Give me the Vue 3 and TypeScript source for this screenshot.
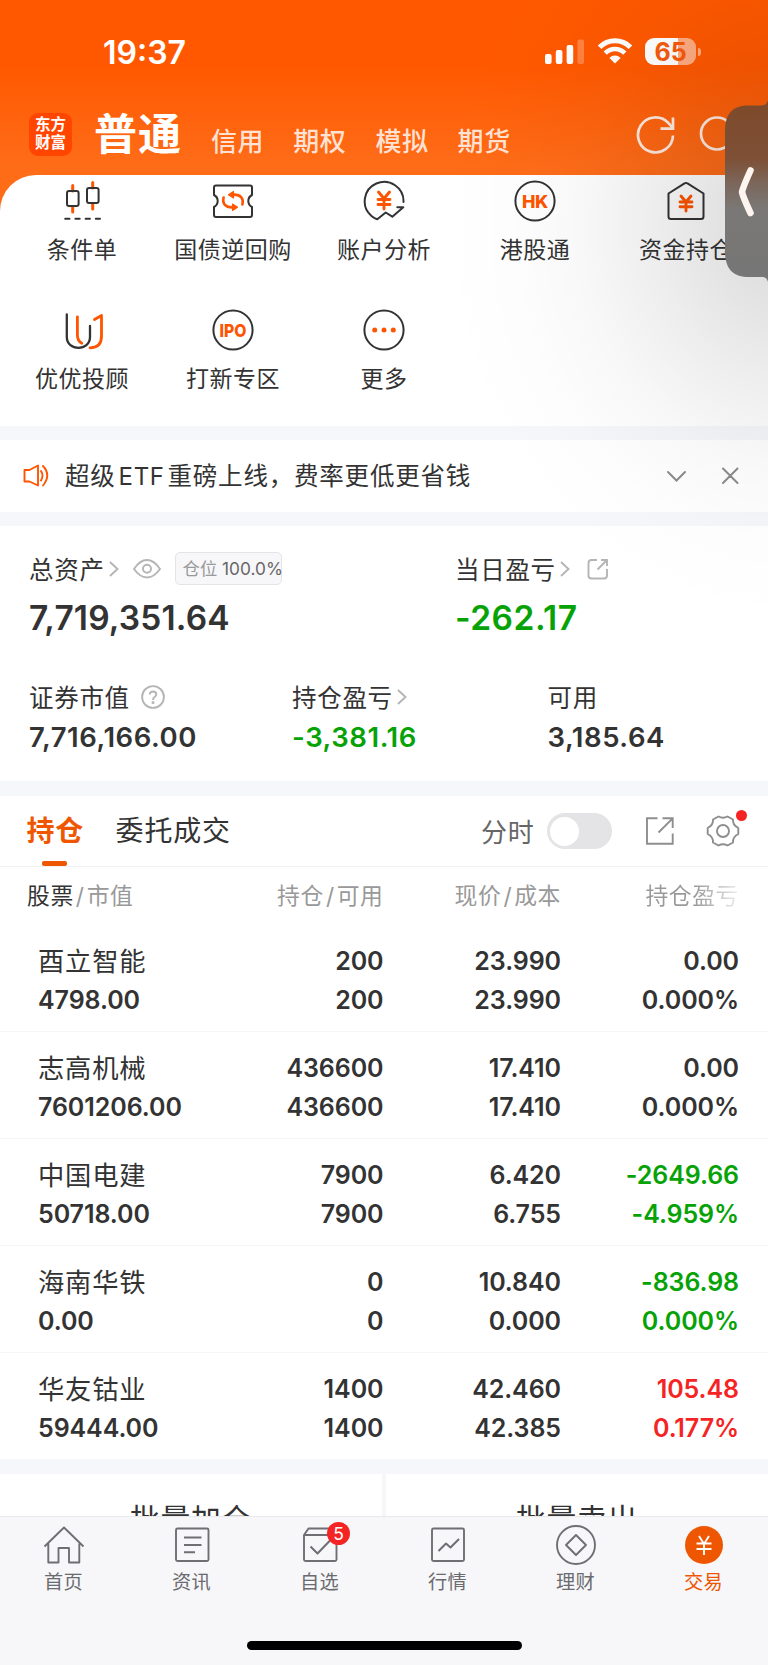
<script setup lang="ts">
interface Shortcut { icon: string; label: string }
interface Holding {
  name: string
  value: string
  qty: string
  avail: string
  price: string
  cost: string
  profit: string
  rate: string
  tone: 'flat' | 'down' | 'up'
}
interface NavItem { icon: string; label: string; badge?: string; active?: boolean }

const accounts: string[] = ['信用', '期权', '模拟', '期货']

const shortcuts: Shortcut[] = [
  { icon: 'candle', label: '条件单' },
  { icon: 'ticket', label: '国债逆回购' },
  { icon: 'analysis', label: '账户分析' },
  { icon: 'hk', label: '港股通' },
  { icon: 'fund', label: '资金持仓' },
  { icon: 'advisor', label: '优优投顾' },
  { icon: 'ipo', label: '打新专区' },
  { icon: 'more', label: '更多' },
]

const holdings: Holding[] = [
  { name: '酉立智能', value: '4798.00', qty: '200', avail: '200', price: '23.990', cost: '23.990', profit: '0.00', rate: '0.000%', tone: 'flat' },
  { name: '志高机械', value: '7601206.00', qty: '436600', avail: '436600', price: '17.410', cost: '17.410', profit: '0.00', rate: '0.000%', tone: 'flat' },
  { name: '中国电建', value: '50718.00', qty: '7900', avail: '7900', price: '6.420', cost: '6.755', profit: '-2649.66', rate: '-4.959%', tone: 'down' },
  { name: '海南华铁', value: '0.00', qty: '0', avail: '0', price: '10.840', cost: '0.000', profit: '-836.98', rate: '0.000%', tone: 'down' },
  { name: '华友钴业', value: '59444.00', qty: '1400', avail: '1400', price: '42.460', cost: '42.385', profit: '105.48', rate: '0.177%', tone: 'up' },
]

const navItems: NavItem[] = [
  { icon: 'home', label: '首页' },
  { icon: 'news', label: '资讯' },
  { icon: 'watch', label: '自选', badge: '5' },
  { icon: 'market', label: '行情' },
  { icon: 'wealth', label: '理财' },
  { icon: 'trade', label: '交易', active: true },
]
</script>

<template>
  <div class="page">
    <header class="top">
      <div class="status">
        <span class="clock">19:37</span>
        <div class="status-icons">
          <svg class="signal" width="40" height="26" viewBox="0 0 40 26" fill="#fff">
            <rect x="0" y="15" width="6.6" height="10" rx="2" />
            <rect x="10.8" y="11" width="6.6" height="14" rx="2" />
            <rect x="21.6" y="6" width="6.6" height="19" rx="2" />
            <rect x="32.4" y="0.5" width="6.6" height="24.5" rx="2" opacity=".25" />
          </svg>
          <svg class="wifi" width="34" height="26" viewBox="0 0 34 26" fill="none" stroke="#fff">
            <path d="M1.6 9.3 A21.4 21.4 0 0 1 32.4 9.3" stroke-width="5" />
            <path d="M7.2 15.2 A13.5 13.5 0 0 1 26.8 15.2" stroke-width="4.6" />
            <path d="M17 25.6 L11.4 19.9 A7.7 7.7 0 0 1 22.6 19.9 Z" fill="#fff" stroke="none" />
          </svg>
          <div class="battery"><span>65</span></div>
          <i class="nub"></i>
        </div>
      </div>
      <div class="accounts">
        <div class="logo"><span>东方</span><span>财富</span></div>
        <h1>普通</h1>
        <nav>
          <a v-for="a in accounts" :key="a">{{ a }}</a>
        </nav>
        <svg class="tools" width="104" height="44" viewBox="0 0 104 44" fill="none" stroke="#ffeadf" stroke-width="2.7">
          <path d="M37 22.5 A17.5 17.5 0 1 1 32.5 10.2 L37 15.2" />
          <path d="M37 4.5 V15.7 H24.5" />
          <circle cx="81" cy="20.5" r="16" />
        </svg>
      </div>
    </header>

    <section class="sheet">
      <div v-for="s in shortcuts" :key="s.label" class="shortcut">
        <svg width="44" height="44" viewBox="0 0 44 44" fill="none" stroke="#333" stroke-width="2" stroke-linecap="round" stroke-linejoin="round">
          <template v-if="s.icon === 'candle'">
            <path d="M12.7 6.5 V12 M12.7 28 V33 M32.7 3.5 V9 M32.7 25 V30" stroke="#ff5500" stroke-width="3" />
            <rect x="7" y="12" width="11.6" height="15" rx="2" />
            <rect x="27" y="9" width="11.6" height="15" rx="2" />
            <path d="M5.2 39.8 H9.5 M15.4 39.8 H19.7 M25.6 39.8 H29.9 M35.8 39.8 H40" />
          </template>
          <template v-else-if="s.icon === 'ticket'">
            <path d="M5 6.500 H39 Q41 6.500 41 8.500 V16 Q37.300 18 37.300 22 Q37.300 26 41 28 V36 Q41 38 39 38 H5 Q3 38 3 36 V28 Q6.700 26 6.700 22 Q6.700 18 3 16 V8.500 Q3 6.500 5 6.500Z" />
            <path d="M12.600 18.500 C11 25 15 28.300 21 28.300 M31.400 25.500 C33 19 29 15.700 23 15.700" stroke="#ff5500" stroke-width="2.700" />
            <path d="M17.500 15.700 L22.500 12.500 V18.900Z M26.500 28.300 L21.500 25.100 V31.500Z" fill="#ff5500" stroke="#ff5500" stroke-width="1.200" />
          </template>
          <template v-else-if="s.icon === 'analysis'">
            <path d="M41.500 23 A19.400 19.400 0 1 0 9.500 37 Q12.500 39.500 15.300 40.300 L23.700 33.500 L30.300 37.700 L41.300 28.300 H35.300" />
            <path d="M16.500 13 L22 19.500 L27.500 13 M22 19.500 V30 M16 20.500 H28 M16 25.500 H28" stroke="#ff5500" stroke-width="2.900" />
          </template>
          <template v-else-if="s.icon === 'hk'">
            <circle cx="22" cy="22" r="19.600" />
            <text x="22" y="28.500" text-anchor="middle" class="glyph hk">HK</text>
          </template>
          <template v-else-if="s.icon === 'fund'">
            <path d="M4.500 14.500 L20.500 4.300 Q22 3.500 23.500 4.300 L39.500 14.500 V37.500 Q39.500 40 37 40 H7 Q4.500 40 4.500 37.500Z" />
            <path d="M17 17 L22 23 L27 17 M22 23 V32 M16 23 H28 M16 27.800 H28" stroke="#ff5500" stroke-width="2.900" />
          </template>
          <template v-else-if="s.icon === 'advisor'">
            <path d="M6.800 6.500 V29 C6.800 43.500 30 43.500 30 29 V18" stroke-width="2.300" />
            <path d="M17.400 9 V27 Q17.400 33 21.800 35.200 M34.500 11.500 L41.500 7.500 V28 Q41.500 39.800 30 39.800" stroke="#ff5500" stroke-width="2.800" />
          </template>
          <template v-else-if="s.icon === 'ipo'">
            <circle cx="22" cy="22" r="19.600" />
            <text x="22" y="28.500" text-anchor="middle" textLength="27" lengthAdjust="spacingAndGlyphs" class="glyph ipo">IPO</text>
          </template>
          <template v-else>
            <circle cx="22" cy="22" r="19.600" />
            <g fill="#ff5500" stroke="none"><circle cx="12.700" cy="22" r="2.500" /><circle cx="22" cy="22" r="2.500" /><circle cx="31.300" cy="22" r="2.500" /></g>
          </template>
        </svg>
        <span>{{ s.label }}</span>
      </div>
    </section>

    <section class="notice">
      <svg width="26" height="24" viewBox="0 0 26 24" fill="none" stroke="#ff5500" stroke-width="1.900" stroke-linejoin="round" stroke-linecap="round">
        <path d="M1.500 6 H6.500 L15 1.500 V21.500 L6.500 17.500 H1.500Z" />
        <path d="M18 7 Q21 11.500 18 16.500 M20 2 Q28.500 11 20 21.500" />
      </svg>
      <p>超级<span class="latin">ETF</span>重磅上线，费率更低更省钱</p>
      <svg class="notice-tools" width="74" height="20" viewBox="0 0 74 20" fill="none" stroke="#8c8c8c" stroke-width="2" stroke-linecap="round">
        <path d="M2 6 L10.500 14.500 L19 6 M57 2.500 L71.500 17 M71.500 2.500 L57 17" />
      </svg>
    </section>

    <section class="assets">
      <div class="row primary">
        <div class="cell">
          <div class="label">
            总资产
            <svg class="arrow" width="10" height="16" viewBox="0 0 10 16"><path d="M1 1 L8.500 8 L1 15" /></svg>
            <svg class="eye" width="28" height="20" viewBox="0 0 28 20"><path d="M1 10 Q7 1 14 1 T27 10 Q21 18.500 14 18.500 T1 10Z" /><circle cx="14" cy="9.700" r="4" /></svg>
            <span class="ratio">仓位 <b>100.0%</b></span>
          </div>
          <strong>7,719,351.64</strong>
        </div>
        <div class="cell">
          <div class="label">
            当日盈亏
            <svg class="arrow" width="10" height="16" viewBox="0 0 10 16"><path d="M1 1 L8.500 8 L1 15" /></svg>
            <svg class="share" width="22" height="22" viewBox="0 0 22 22"><path d="M10 2 H4.500 Q1.500 2 1.500 5 V17.500 Q1.500 20.500 4.500 20.500 H17 Q20 20.500 20 17.500 V11 M14 2 H20 V8 M20 2 L10.500 11.500" /></svg>
          </div>
          <strong class="down day">-262.17</strong>
        </div>
      </div>
      <div class="row secondary">
        <div class="cell">
          <div class="label">
            证券市值
            <svg class="help" width="24" height="24" viewBox="0 0 24 24"><circle cx="12" cy="12" r="10.900" /><path d="M8.700 9.500 Q9 6.500 12 6.500 Q15.300 6.500 15.300 9.300 Q15.300 11 13.600 12 Q12 13 12 15" /><circle cx="12" cy="17.500" r=".6" /></svg>
          </div>
          <strong>7,716,166.00</strong>
        </div>
        <div class="cell">
          <div class="label">
            持仓盈亏
            <svg class="arrow" width="10" height="16" viewBox="0 0 10 16"><path d="M1 1 L8.500 8 L1 15" /></svg>
          </div>
          <strong class="down">-3,381.16</strong>
        </div>
        <div class="cell">
          <div class="label">可用</div>
          <strong>3,185.64</strong>
        </div>
      </div>
    </section>

    <section class="holdings">
      <div class="tabs">
        <a class="tab active">持仓</a>
        <a class="tab">委托成交</a>
        <div class="tab-tools">
          <span>分时</span>
          <i class="toggle"></i>
          <svg class="open" width="28" height="28" viewBox="0 0 28 28" fill="none" stroke="#8e8e8e" stroke-width="1.900">
            <path d="M11.500 1.300 H1 V26.700 H26.700 V16.500 M16.500 1.300 H26.700 V11 M26.700 1.300 L12.500 15.500" />
          </svg>
          <div class="gear">
            <svg width="34" height="34" viewBox="0 0 34 34" fill="none" stroke="#8e8e8e" stroke-width="1.900" stroke-linejoin="round">
              <circle cx="17" cy="17" r="6" />
              <path d="M12.500 2.500 Q17 5 21.500 2.500 L27 5.500 Q26.500 11 32.300 14 V20 Q26.500 23 27 28.500 L21.500 31.500 Q17 29 12.500 31.500 L7 28.500 Q7.500 23 1.700 20 V14 Q7.500 11 7 5.500Z" />
            </svg>
            <i></i>
          </div>
        </div>
      </div>
      <div class="grid head">
        <span><em>股票</em><s>/</s>市值</span>
        <span>持仓<s>/</s>可用</span>
        <span>现价<s>/</s>成本</span>
        <span class="fade">持仓盈亏</span>
      </div>
      <div v-for="h in holdings" :key="h.name" class="grid line">
        <div class="name"><p>{{ h.name }}</p><p>{{ h.value }}</p></div>
        <div><p>{{ h.qty }}</p><p>{{ h.avail }}</p></div>
        <div><p>{{ h.price }}</p><p>{{ h.cost }}</p></div>
        <div :class="h.tone"><p>{{ h.profit }}</p><p>{{ h.rate }}</p></div>
      </div>
    </section>

    <section class="batch">
      <button>批量加仓</button>
      <button>批量卖出</button>
    </section>

    <footer class="dock">
      <div class="nav">
        <a v-for="n in navItems" :key="n.label" :class="{ active: n.active }">
          <div class="nav-icon">
            <svg width="42" height="42" viewBox="0 0 42 42" fill="none" stroke="#6f6f73" stroke-width="1.900" stroke-linejoin="round">
              <path v-if="n.icon === 'home'" d="M1.500 22.500 L21 3.500 L40.500 22.500 M5.300 19.500 V38.500 H15.500 V24 H26 V38.500 H36.300 V19.500" />
              <template v-else-if="n.icon === 'news'">
                <rect x="5" y="4.500" width="32.500" height="32.500" rx="1.500" />
                <path d="M13 13.500 H30.500 M13 21 H30.500 M13 28.300 H24" />
              </template>
              <template v-else-if="n.icon === 'watch'">
                <path d="M5 11 L9.500 4.500 H33 L37.500 11 V35.500 Q37.500 37 36 37 H6.500 Q5 37 5 35.500Z M5 11 H37.500" />
                <path d="M11.500 22.500 L18.500 29.500 L31.500 16" stroke-width="2" />
              </template>
              <template v-else-if="n.icon === 'market'">
                <rect x="5" y="4.500" width="32" height="32.500" rx="1.500" />
                <path d="M11.500 27 L19 19.500 L23.500 23.500 L32 15" stroke-width="2" />
              </template>
              <template v-else-if="n.icon === 'wealth'">
                <circle cx="21" cy="21" r="19" />
                <path d="M21 11 L31 21 L21 31 L11 21Z" />
              </template>
              <template v-else>
                <circle cx="21" cy="21" r="19" fill="#ee5602" stroke="none" />
                <path d="M16 12 L21 20 L26 12 M21 20 V31 M13.500 19.500 H28.500 M13.500 25 H28.500" stroke="#fff" />
              </template>
            </svg>
            <b v-if="n.badge">{{ n.badge }}</b>
          </div>
          <span>{{ n.label }}</span>
        </a>
      </div>
      <i class="home-bar"></i>
    </footer>

    <div class="glow"></div>
    <svg class="drawer" width="43" height="184" viewBox="0 0 43 184">
      <defs>
        <linearGradient id="drawerFill" x1="0" y1="0" x2="0" y2="1">
          <stop offset="0" stop-color="#7e492a" />
          <stop offset=".32" stop-color="#7e5036" />
          <stop offset=".46" stop-color="#7b675b" />
          <stop offset=".6" stop-color="#7a7876" />
          <stop offset="1" stop-color="#767676" />
        </linearGradient>
      </defs>
      <path d="M43 1 C42 5 40 6.500 36 6.500 H24 C8 6.500 0 14 0 32 V152 C0 170 8 178 24 178 H36 C40 178 42 179 43 183Z" fill="url(#drawerFill)" />
      <path d="M25.500 71.500 Q18 88 17 93 Q18 98 25.500 114" fill="none" stroke="#fff5f0" stroke-width="6.500" stroke-linecap="round" stroke-linejoin="round" />
    </svg>
  </div>
</template>

<style>
html,
body {
  margin: 0;
  background: #fff;
}
</style>

<style scoped>
.page {
  position: relative;
  width: 768px;
  height: 1665px;
  overflow: hidden;
  display: flex;
  flex-direction: column;
  background: #f6f7fa;
  color: #333;
  font-family: Inter, "Noto Sans CJK SC", sans-serif;
}
.page * { box-sizing: border-box; }
p, h1 { margin: 0; }
i, em, s { font-style: normal; text-decoration: none; }
svg { display: block; flex: none; }

.top {
  flex: none;
  height: 225px;
  background: linear-gradient(#ff5800 0, #ff5800 65px, #ff6c18 165px, #ff6c18 100%);
  color: #fff;
}
.status {
  display: flex;
  height: 105px;
  padding: 0 67px 0 103px;
  justify-content: space-between;
}
.clock { font-size: 32px; font-weight: 600; line-height: 106px; letter-spacing: 0; }
.status-icons { display: flex; padding-top: 38px; align-items: flex-start; }
.signal { margin: 1px 13px 0 0; }
.wifi { margin-right: 13px; }
.battery {
  width: 51px;
  height: 27px;
  border-radius: 9px;
  background: linear-gradient(90deg, #fff 33px, rgba(255, 255, 255, .5) 33px);
  color: #f85a0b;
  font-size: 25px;
  font-weight: 700;
  line-height: 28px;
  text-align: center;
}
.nub { width: 3px; height: 8px; margin: 10px 0 0 2px; border-radius: 0 4px 4px 0; background: rgba(255, 255, 255, .5); }
.accounts { display: flex; align-items: flex-start; padding-left: 29px; }
.logo {
  display: flex;
  flex-direction: column;
  width: 43px;
  height: 43px;
  margin-top: 8px;
  padding-top: 3px;
  border-radius: 9px;
  background: #ff4500;
  font-size: 15.5px;
  font-weight: 700;
  line-height: 18px;
  text-align: center;
}
h1 { margin: -2px 0 0 22px; font-size: 43px; font-weight: 700; line-height: 62px; letter-spacing: 1px; }
nav { display: flex; gap: 29px; margin: 16.5px 0 0 29px; }
nav a { font-size: 26px; font-weight: 500; line-height: 40px; letter-spacing: .6px; color: rgba(255, 255, 255, .82); }
.tools { margin: 7.5px 0 0 125.5px; }

.sheet {
  flex: none;
  display: grid;
  grid-template-columns: repeat(5, 151px);
  grid-auto-rows: 128.5px;
  height: 251px;
  margin-top: -50px;
  padding: 4px 6px 0;
  overflow: hidden;
  border-radius: 36px 36px 0 0;
  background: #fff;
}
.shortcut { display: flex; flex-direction: column; align-items: center; }
.shortcut span { margin: 12px 0 0 1px; font-size: 23px; line-height: 30px; letter-spacing: .5px; white-space: nowrap; }
.glyph { font-family: Inter, sans-serif; font-weight: 800; fill: #ff5500; stroke: none; }
.hk { font-size: 18px; letter-spacing: -.5px; }
.ipo { font-size: 18px; }

.notice {
  flex: none;
  display: flex;
  align-items: center;
  height: 71.5px;
  margin-top: 14px;
  padding: 0 28.5px 0 23px;
  background: #fff;
}
.notice p { margin: 1px 0 0 16px; font-size: 24.5px; line-height: 36px; letter-spacing: .8px; }
.latin { margin: 0 3px 0 3px; letter-spacing: .6px; font-size: 24px; }
.notice-tools { margin-left: auto; }

.assets { flex: none; height: 255.5px; margin-top: 14px; padding: 26px 0 0 29px; background: #fff; }
.row { display: flex; }
.primary { height: 128px; }
.primary .cell:first-child { width: 426px; }
.secondary .cell:first-child { width: 263px; }
.secondary .cell:nth-child(2) { width: 255.5px; }
.label { display: flex; align-items: center; height: 34px; font-size: 24.5px; letter-spacing: .7px; white-space: nowrap; }
.label svg { fill: none; stroke: #b5b5b5; stroke-width: 1.9; }
.label .arrow { margin-left: 4.5px; }
.eye { margin-left: 13.5px; }
.share { margin-left: 16.5px; }
.help { margin-left: 11.5px; }
.ratio {
  width: 107px;
  height: 33px;
  margin-left: 14px;
  padding-left: 7px;
  border: 1px solid #e4e4e6;
  border-radius: 5px;
  background: #f7f7f9;
  color: #999;
  font-size: 17.3px;
  line-height: 32px;
  letter-spacing: 0;
}
.ratio b { font-weight: 400; color: #666; letter-spacing: 0; }
.cell strong { display: block; font-weight: 600; }
.primary strong { margin-top: 12.5px; font-size: 33.5px; line-height: 40px; letter-spacing: .15px; }
.primary .day { letter-spacing: .5px; }
.secondary strong { margin-top: 5.5px; font-size: 27.5px; line-height: 37px; letter-spacing: .55px; }
.down { color: #06a206; }
.up { color: #f52424; }

.holdings { flex: none; height: 663px; margin-top: 15px; background: #fff; }
.tabs { display: flex; height: 71px; padding: 0 28px 0 26.5px; border-bottom: 1px solid #f1f1f3; }
.tab { position: relative; font-size: 28px; line-height: 71px; letter-spacing: .8px; margin-right: 31.5px; }
.tab.active { color: #ee5602; font-weight: 700; }
.tab.active::after {
  content: "";
  position: absolute;
  left: 15.5px;
  bottom: 0;
  width: 25px;
  height: 5px;
  border-radius: 2px;
  background: #ee5602;
}
.tab-tools { display: flex; align-items: center; height: 70px; margin-left: auto; color: #666; font-size: 26px; letter-spacing: .8px; }
.tab-tools span { margin-top: -2px; }
.toggle { width: 65px; height: 36px; margin-left: 12px; padding: 3.5px; border-radius: 18px; background: #e4e4e6; }
.toggle::after { content: ""; display: block; width: 29px; height: 29px; border-radius: 50%; background: #fff; }
.open { margin-left: 34px; }
.gear { position: relative; margin: 0 0 0 32.5px; }
.gear i { position: absolute; right: -7px; top: -4.5px; width: 11px; height: 11px; border-radius: 50%; background: #f52424; }
.grid { display: grid; grid-template-columns: 206px 177.5px 177.5px 178px; text-align: right; }
.grid > :first-child { text-align: left; }
.head { height: 57.5px; color: #999; font-size: 22.8px; line-height: 57px; letter-spacing: .6px; }
.head > :first-child { padding-left: 27px; }
.head em { color: #333; }
.head s { margin: 0 2px; }
.fade { background: linear-gradient(90deg, #999 75%, #eee 100%); background-clip: text; color: transparent; }
.line { height: 107px; padding-top: 17px; border-bottom: 1px solid #f5f5f6; font-size: 25px; font-weight: 600; line-height: 39px; letter-spacing: -.08px; }
.line:last-child { border-bottom: 0; }
.line .name { padding-left: 38px; }
.name p:first-child { font-size: 26.3px; font-weight: 400; letter-spacing: .8px; }

.batch { flex: none; display: flex; gap: 4px; height: 42px; margin-top: 15px; overflow: hidden; }
.batch button {
  flex: 1;
  height: 90px;
  padding: 0;
  border: 0;
  background: #fff;
  color: #333;
  font: 400 29.8px/90px Inter, "Noto Sans CJK SC", sans-serif;
  letter-spacing: .7px;
}

.dock {
  flex: none;
  display: flex;
  flex-direction: column;
  align-items: center;
  height: 149px;
  border-top: 1px solid #e9e9ec;
  background: #f7f7fa;
}
.nav { display: grid; grid-template-columns: repeat(6, 1fr); width: 100%; height: 124px; padding-top: 7px; }
.nav a { display: flex; flex-direction: column; align-items: center; color: #6b6b6f; font-size: 19.2px; letter-spacing: .4px; }
.nav a.active { color: #ee5602; }
.nav-icon { position: relative; height: 42px; }
.nav-icon b {
  position: absolute;
  left: 28px;
  top: -2px;
  width: 23px;
  height: 23px;
  border-radius: 50%;
  background: #f52424;
  color: #fff;
  font-size: 17.5px;
  font-weight: 400;
  line-height: 24px;
  letter-spacing: 0;
  text-align: center;
}
.nav span { margin: 3px 1px 0 0; line-height: 26px; }
.home-bar { width: 275px; height: 9px; border-radius: 5px; background: #000; }

.glow {
  position: absolute;
  right: 0;
  top: 0;
  width: 380px;
  height: 640px;
  pointer-events: none;
  background: radial-gradient(ellipse 350px 400px at 400px 225px, rgba(0, 0, 0, .135) 0, rgba(0, 0, 0, .12) 15%, rgba(0, 0, 0, .065) 40%, rgba(0, 0, 0, .026) 60%, rgba(0, 0, 0, .008) 80%, rgba(0, 0, 0, 0) 100%);
}
.drawer { position: absolute; right: 0; top: 99px; }
</style>
